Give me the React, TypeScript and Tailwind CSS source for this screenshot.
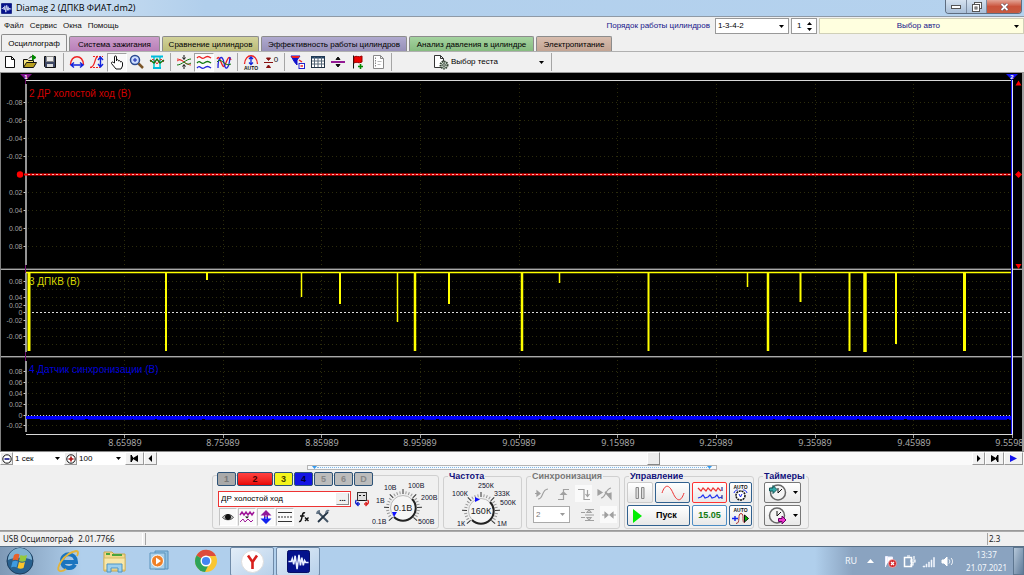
import { FC, ReactNode } from "react";
import clsx from "clsx";

type WithChildren = { children?: ReactNode; className?: string };

const tabs = [
  { name: "Осциллограф", style: "w-[66px] bg-[#f0f0f0]", active: true },
  { name: "Система зажигания", style: "w-[91px] bg-linear-to-b from-[#cc9dcb] to-[#b97fb8]" },
  { name: "Сравнение цилиндров", style: "w-[97px] bg-linear-to-b from-[#d2d29a] to-[#bcbc78]" },
  { name: "Эффективность работы цилиндров", style: "w-[146px] bg-linear-to-b from-[#b0aacf] to-[#9790b8]" },
  { name: "Анализ давления в цилиндре", style: "w-[125px] bg-linear-to-b from-[#a5d3a0] to-[#86bb80]" },
  { name: "Электропитание", style: "w-[76px] bg-linear-to-b from-[#d8bdae] to-[#c3a493]" },
];

/* ---------- small shared parts ---------- */

const Icon: FC<WithChildren & { box?: string }> = ({ children, className = "size-4", box = "0 0 16 16" }) => (
  <svg viewBox={box} className={clsx("block shrink-0", className)} fill="none" stroke="#111" strokeWidth="1" aria-hidden="true">
    {children}
  </svg>
);

const Caret: FC<{ className?: string }> = ({ className = "fill-black" }) => (
  <svg viewBox="0 0 5 3" className={clsx("block h-[3px] w-[5px] shrink-0", className)} aria-hidden="true">
    <path d="M0 0h5L2.5 3z" />
  </svg>
);

type SelectProps = { id: string; label: string; options: string[]; className?: string; disabled?: boolean };

const Select: FC<SelectProps> = ({ id, label, options, className, disabled }) => (
  <div className={clsx("grid items-center bg-white", className)}>
    <select
      id={id}
      aria-label={label}
      disabled={disabled}
      className="col-start-1 row-start-1 w-full appearance-none bg-transparent pl-[2px] text-[8px] leading-[12px] outline-none"
    >
      {options.map((o) => (
        <option key={o}>{o}</option>
      ))}
    </select>
    <span className="pointer-events-none col-start-1 row-start-1 justify-self-end pr-[4px]">
      <Caret className={disabled ? "fill-[#999]" : "fill-black"} />
    </span>
  </div>
);

const ToolButton: FC<WithChildren & { label: string; pressed?: boolean }> = ({ children, label, pressed }) => (
  <button
    type="button"
    aria-label={label}
    className={clsx(
      "flex h-[19px] w-[20px] items-center justify-center border",
      pressed ? "border-[#a0a0a0] border-r-white border-b-white bg-[#fafafa]" : "border-transparent",
    )}
  >
    <Icon>{children}</Icon>
  </button>
);

const Divider = () => <div className="ml-[3px] mr-[3px] h-[18px] w-px bg-[#a5a5a5]" />;

const Logo: FC<{ className?: string }> = ({ className }) => (
  <Icon className={className} box="0 0 24 24">
    <rect x="0.5" y="0.5" width="23" height="23" rx="2" fill="#04128c" stroke="#02085e" />
    <path
      d="M1.500 12h3l1-3 1.500 6 1.500-9 2 14 2-15 1.500 11 1.500-8 1.500 8 1.300-5 1.200 2H22.500"
      stroke="#e8f0ff"
      strokeWidth="1.600"
    />
  </Icon>
);

/* ---------- header ---------- */

const TitleBar = () => (
  <header className="flex h-[17px] items-start justify-between border-b border-[#8f9aa6] bg-linear-to-r from-[#d8e6f3] via-[#b1cfec] via-20% to-[#b5d2ee]">
    <div className="flex h-4 items-center gap-[4px] pl-px">
      <Logo className="size-[11px]" />
      <h1 className="font-['Open_Sans','Noto_Sans',sans-serif] text-[9px] leading-[14px] text-black">
        Diamag 2 (ДПКВ ФИАТ.dm2)
      </h1>
    </div>
    <div className="mr-[2px] flex h-[14px] overflow-hidden rounded-b-[4px] border border-t-0 border-[#5e6d80]">
      <button type="button" aria-label="Свернуть" className="flex w-[21px] items-center justify-center border-r border-[#7d8ca0] bg-linear-to-b from-[#d5e2f0] to-[#a9bfd8]">
        <Icon className="h-[5px] w-[10px]" box="0 0 10 5">
          <rect x="0.5" y="1.500" width="9" height="3" fill="#fff" stroke="#555" />
        </Icon>
      </button>
      <button type="button" aria-label="Восстановить" className="flex w-[20px] items-center justify-center border-r border-[#7d8ca0] bg-linear-to-b from-[#d5e2f0] to-[#a9bfd8]">
        <Icon className="size-[10px]" box="0 0 10 10">
          <rect x="2.500" y="0.5" width="7" height="6" fill="#fff" stroke="#555" />
          <rect x="0.5" y="2.500" width="7" height="7" fill="#fff" stroke="#555" />
          <rect x="3" y="5" width="2" height="2" stroke="#555" />
        </Icon>
      </button>
      <button type="button" aria-label="Закрыть" className="flex w-[34px] items-center justify-center bg-linear-to-b from-[#e2a497] via-[#c9523b] to-[#c75b40]">
        <Icon className="h-[8px] w-[9px]" box="0 0 9 8">
          <path d="M1.500 1l6 6M7.500 1l-6 6" stroke="#545" strokeWidth="3" />
          <path d="M1.500 1l6 6M7.500 1l-6 6" stroke="#fff" strokeWidth="1.800" />
        </Icon>
      </button>
    </div>
  </header>
);

const MenuRow = () => (
  <div className="flex h-[18px] items-center justify-between">
    <nav className="flex gap-[6px] pl-[4px] text-[8px] leading-[12px]">
      {["Файл", "Сервис", "Окна", "Помощь"].map((m) => (
        <a key={m} href="#" className="text-[#111]">
          {m}
        </a>
      ))}
    </nav>
    <div className="flex items-center gap-[2px] text-[8px] leading-[12px]">
      <label htmlFor="order" className="pr-[3px] text-[#15158a]">
        Порядок работы цилиндров
      </label>
      <Select id="order" label="Порядок работы цилиндров" options={["1-3-4-2", "1-2-4-3"]} className="h-4 w-[74px] border border-[#999]" />
      <div className="flex h-4 w-[26px] items-center border border-[#999] bg-white">
        <input aria-label="Цилиндр" defaultValue="1" className="w-[12px] min-w-0 flex-1 pl-[5px] outline-none" />
        <div className="flex flex-col gap-[3px] pr-[4px]">
          <button type="button" aria-label="Больше" className="rotate-180">
            <Caret />
          </button>
          <button type="button" aria-label="Меньше">
            <Caret />
          </button>
        </div>
      </div>
      <button type="button" className="flex h-4 w-[205px] items-center justify-end gap-[74px] border border-[#d0d0b8] bg-[#ffffdf] pr-[4px] text-[#15158a]">
        Выбор авто
        <Caret />
      </button>
    </div>
  </div>
);

const TabRow = () => (
  <div className="flex h-[17px] items-end gap-[2px] border-b border-[#b0b0b0] pl-px" role="tablist">
    {tabs.map((t) => (
      <button
        key={t.name}
        type="button"
        role="tab"
        aria-selected={!!t.active}
        className={clsx(
          "rounded-t-[2px] border border-b-0 border-[#8c8c8c] text-center text-[8px] leading-[13px] whitespace-nowrap text-black",
          t.active ? "h-[17px]" : "h-[15px]",
          t.style,
        )}
      >
        {t.name}
      </button>
    ))}
  </div>
);

const Toolbar = () => (
  <div className="flex h-[21px] items-center border-b border-[#999]">
    <ToolButton label="Новый">
      <path d="M3.500 2.500h6l3 3v8h-9zM9.500 2.500v3h3" fill="#fff" />
    </ToolButton>
    <ToolButton label="Открыть">
      <path d="M1.500 13.500v-8h4l1 1h5v2" fill="#f4e27a" />
      <path d="M1.500 13.500l3-5h10l-3 5z" fill="#b8a020" />
      <path d="M7 4.500c1-2 3-2 4-1.500" />
      <path d="M10.500 1l3.500 2.500-3.500 2.500z" fill="#080" stroke="#080" />
    </ToolButton>
    <ToolButton label="Сохранить">
      <path d="M2.500 2.500h11v11h-10l-1-1z" fill="#3c4664" />
      <rect x="4.500" y="2.500" width="7" height="5" fill="#eee" stroke="#888" />
      <rect x="5" y="10" width="6" height="3" fill="#ddd" stroke="none" />
    </ToolButton>
    <Divider />
    <ToolButton label="Ширина">
      <path d="M1.500 11c0-11 13-11 13 0" stroke="#e22" strokeWidth="1.500" />
      <path d="M2 11h12M5 8.500L2 11l3 2.500M11 8.500L14 11l-3 2.500" stroke="#12d" strokeWidth="1.400" />
    </ToolButton>
    <ToolButton label="Высота">
      <path d="M1 13.500c6 0 4-11 8-11" stroke="#e22" strokeWidth="1.300" />
      <path d="M4 2.500h10M1 13.500h10" stroke="#e22" strokeDasharray="2 1" />
      <path d="M11.500 3v10M9 6l2.500-3L14 6M9 10l2.500 3L14 10" stroke="#12d" strokeWidth="1.400" />
    </ToolButton>
    <ToolButton label="Рука" pressed>
      <path d="M5.500 9V3c0-1.500 2-1.500 2 0v4-1c1-1 2 0 2 1 1-1 2 0 2 1 1-1 2 0 2 1v3l-1.500 3h-5L2.500 9.500c-.5-1.500 1-2 2-1z" fill="#fff" />
    </ToolButton>
    <ToolButton label="Масштаб">
      <circle cx="6" cy="6" r="4.500" fill="#cdf" stroke="#2a4a90" strokeWidth="1.500" />
      <path d="M4 6h4M6 4v4" stroke="#12a" />
      <path d="M9.500 9.500l4.500 4.500" stroke="#7a5528" strokeWidth="2.500" />
    </ToolButton>
    <ToolButton label="Курсоры">
      <path d="M5 2v12M11 2v12" stroke="#0cc" strokeWidth="1.500" />
      <path d="M2 2.500h12M4 14h8" stroke="#0bd" strokeWidth="2" />
      <path d="M1 8l3-3 4 5 4-5 3 3" stroke="#d33" />
      <path d="M1 6l4 3 3-4 3 4 4-3" stroke="#171" strokeWidth="1.300" />
    </ToolButton>
    <Divider />
    <ToolButton label="Центр">
      <path d="M1 5c5 0 9 6 14 6M1 7c3-2 5-1 7 1" stroke="#e33" />
      <path d="M1 11c5 0 9-6 14-6M15 9c-3 2-5 1-7-1" stroke="#171" />
      <path d="M8 1v4M6.500 3.500L8 5.500l1.500-2M8 15v-4M6.500 12.500L8 10.500l1.500 2" />
    </ToolButton>
    <ToolButton label="Раздельно" pressed>
      <path d="M1 4c3-4 4 2 7 0s4-2 7 0" stroke="#e22" strokeWidth="1.300" />
      <path d="M1 9c3-4 4 2 7 0s4-2 7 0" stroke="#171" strokeWidth="1.300" />
      <path d="M1 14c3-4 4 2 7 0s4-2 7 0" stroke="#22d" strokeWidth="1.300" />
    </ToolButton>
    <ToolButton label="Наложение">
      <path d="M1 5c3-7 5 13 8 6s4-10 6-5" stroke="#e22" strokeWidth="1.300" />
      <path d="M2 14c0-13 5-13 6-5s5 7 6-6" stroke="#22d" strokeWidth="1.300" />
      <path d="M1 8c4-6 8 6 14 2" stroke="#171" />
    </ToolButton>
    <Divider />
    <ToolButton label="Автомасштаб">
      <path d="M1.500 10C2-1 14-1 14.500 10" stroke="#e22" strokeWidth="1.300" />
      <path d="M8 3v7M6 5l2-2 2 2M6 8.500l2 2 2-2" stroke="#12d" strokeWidth="1.300" />
      <text x="8" y="15.500" textAnchor="middle" stroke="none" fill="#111" className="text-[5px] font-bold">AUTO</text>
    </ToolButton>
    <ToolButton label="Обнулить">
      <path d="M1 8.500h9M3.500 4h4L5.500 6.500z" fill="#811" stroke="#811" />
      <path d="M3.500 13.500h4L5.500 11z" fill="#811" stroke="#811" />
      <text x="13" y="8" textAnchor="middle" stroke="none" fill="#111" className="text-[8px]">0</text>
    </ToolButton>
    <Divider />
    <ToolButton label="Фильтр">
      <path d="M1 2h9L7 6v5L4.500 8z" fill="#11c" stroke="#11c" />
      <path d="M1 2h9L8.500 4h-6z" fill="#e22" stroke="none" />
      <rect x="9" y="9.500" width="5.500" height="5" fill="#fff" stroke="#22c" />
      <path d="M9 6l3 2M10.500 12h2.500" stroke="#e22" strokeWidth="1.500" />
    </ToolButton>
    <ToolButton label="Таблица">
      <rect x="1.500" y="2.500" width="13" height="11" fill="#fff" stroke="#234" />
      <path d="M1.500 3.500h13" stroke="#246" strokeWidth="2" />
      <path d="M4.500 3v10M8 3v10M11.500 3v10M2 7h12M2 10h12" stroke="#567" />
    </ToolButton>
    <ToolButton label="Разделить">
      <path d="M1 8h14" stroke="#808" strokeWidth="1.800" />
      <path d="M8 3l2 2.500H6zM8 13l2-2.500H6z" fill="#111" />
    </ToolButton>
    <ToolButton label="Метка">
      <path d="M3.500 1.500v13" />
      <path d="M4 3c3-2 4 1 8-1v6c-4 2-5-1-8 1z" fill="#e00" stroke="#900" />
      <path d="M10.500 10v5M8 12.500h5" stroke="#080" strokeWidth="1.600" />
    </ToolButton>
    <ToolButton label="Отчёт">
      <path d="M3.500 1.500h7l3 3v10h-10zM10.500 1.500v3h3" fill="#fff" stroke="#888" />
      <path d="M5.500 3.500v10" stroke="#888" strokeDasharray="1.500 1" />
      <path d="M7.500 7.500h4M7.500 10.500h3" stroke="#bbb" />
    </ToolButton>
    <Divider />
    <button type="button" className="flex h-[19px] w-[156px] items-center gap-[2px] pr-[7px] pl-[38px] text-[8px] leading-[12px]">
      <Icon>
        <path d="M1.500 1.500h6l3 3v9h-9zM7.500 1.500v3h3" fill="#fff" stroke="#333" />
        <circle cx="11" cy="11" r="3.500" fill="#cdd8cd" stroke="#354535" strokeWidth="2" strokeDasharray="1.500 0.800" />
        <circle cx="11" cy="11" r="1.300" fill="#fff" stroke="#354535" />
      </Icon>
      <span className="flex-1 text-left">Выбор теста</span>
      <Caret />
    </button>
    <div className="h-[18px] w-px bg-[#a5a5a5]" />
  </div>
);

/* ---------- oscilloscope screen ---------- */

const timeMarks = ["8.65989", "8.75989", "8.85989", "8.95989", "9.05989", "9.15989", "9.25989", "9.35989", "9.45989", "9.55989"];

const scales: { y: number; label?: string }[] = [
  { y: 102, label: "-0.08" },
  { y: 120, label: "-0.06" },
  { y: 138, label: "-0.04" },
  { y: 156, label: "-0.02" },
  { y: 192, label: "0.02" },
  { y: 210, label: "0.04" },
  { y: 228, label: "0.06" },
  { y: 246, label: "0.08" },
  { y: 281, label: "0.08" },
  { y: 289 },
  { y: 297, label: "0.04" },
  { y: 305, label: "0.02" },
  { y: 312, label: "0" },
  { y: 320, label: "-0.02" },
  { y: 328 },
  { y: 336, label: "-0.06" },
  { y: 344 },
  { y: 371, label: "0.08" },
  { y: 382, label: "0.06" },
  { y: 393, label: "0.04" },
  { y: 404, label: "0.02" },
  { y: 415, label: "0" },
  { y: 425, label: "-0.02" },
];

// [x, bottom, width] of every pulse of the crankshaft sensor
const pulses = [
  [29, 351, 3], [166, 351, 2], [207, 280, 2], [301.5, 297, 1.5], [340, 304, 2], [397.5, 322, 1.5],
  [415, 351, 2.5], [449, 304, 2], [522, 351, 2.5], [559.5, 283, 1.5], [648.5, 351, 2], [747.5, 287, 1.5],
  [768, 351, 2.5], [800.5, 302, 2], [849.5, 351, 2], [865, 352, 3.5], [896, 344, 2], [964.5, 351, 3],
];

const Screen = () => (
  <svg viewBox="0 73 1024 378" className="block h-auto w-full bg-black" role="img" aria-label="Осциллограммы">
    <rect x="0" y="73" width="1" height="378" fill="#808080" />
    <g stroke="#2c2c0c" strokeDasharray="1 3">
      {timeMarks.slice(0, 9).map((t, i) => (
        <path key={t} d={`M${Math.round(124 + i * 98.65) + 0.5} 84V434`} />
      ))}
      {scales.map((s) => (
        <path key={s.y} d={`M28 ${s.y + 0.5}H1011`} />
      ))}
    </g>
    <path d="M26 80.500H1013" stroke="#d8d8d8" />
    <path d="M1 268.500H1022M1 357.500H1022" stroke="#444" />
    <path d="M1 269.500H1022M1 356.500H1022" stroke="#a8a8a8" />
    <path d="M26 434.500H1013" stroke="#d8d8d8" />
    <path d="M26 84V265M26 273V352M26 361V432" stroke="#959595" strokeWidth="2" />
    <path d="M25.500 80V84M25.500 265V273M25.500 352V361" stroke="#70106e" />
    <g className="text-[7px]" fill="#a4a4a4" textAnchor="end">
      {scales.map((s) => (
        <g key={s.y}>
          <path d={`M23.500 ${s.y + 0.5}h2`} stroke="#ccc" />
          {s.label && <text x="22.500" y={s.y + 3}>{s.label}</text>}
        </g>
      ))}
    </g>
    <g className="font-['Noto_Sans',sans-serif] text-[9px]" fill="#a8a8a8" textAnchor="middle">
      {timeMarks.map((t, i) => (
        <g key={t}>
          <path d={`M${Math.round(124 + i * 98.65) + 0.5} 435v3`} stroke="#999" />
          <text x={Math.round(124.500 + i * 98.65)} y="446">{t}</text>
        </g>
      ))}
    </g>

    <path d="M24 174.500H1011" stroke="#f00" strokeWidth="2" />
    <path d="M28 174.500H1011" stroke="#ffb0b0" strokeDasharray="2 2" />
    <circle cx="20" cy="174.500" r="3.200" fill="#f00" />

    <path d="M26 272.500H1011" stroke="#ff0" strokeWidth="1.500" />
    <path d="M28 312.500H1011" stroke="#ddd" strokeDasharray="2 2" />
    {pulses.map(([x, bottom, width]) => (
      <path key={x} d={`M${x} 272V${bottom}`} stroke="#ff0" strokeWidth={width} />
    ))}

    <rect x="26" y="416" width="986" height="3" fill="#00f" />
    <path d="M28 415.500H1011" stroke="#ccd" strokeDasharray="1 2" />
    <path d="M40 419.500H1011" stroke="#00c" strokeDasharray="31 2 12 3 44 1 22 2" />

    <g className="text-[10px]">
      <text x="29" y="97" fill="#d00000">2 ДР холостой ход (В)</text>
      <text x="29" y="285" fill="#d8d800">3 ДПКВ (В)</text>
      <text x="29" y="373" fill="#0000d8">4 Датчик синхронизации (В)</text>
    </g>

    <path d="M1011.500 78V434" stroke="#11e" />
    <path d="M1012.500 80V434" stroke="#e0e0ff" />
    <path d="M20 74H32L26 80z" fill="#80108a" />
    <path d="M1006 74H1018L1012 80z" fill="#11e" />
    <g className="text-[6px] font-bold" fill="#fff" textAnchor="middle">
      <text x="26" y="79">1</text>
      <text x="1012" y="79">2</text>
    </g>
    <path d="M1018.500 80.500l3 5h-6zM1018.500 269l3-5h-6zM1018.500 171l3.500 3.500-3.500 3.500-3.500-3.500z" fill="#f00" />
    <rect x="1022" y="73" width="2" height="378" fill="#a0a0a0" />
  </svg>
);

const RoundSign: FC<{ label: string; d: string; color: string }> = ({ label, d, color }) => (
  <button type="button" aria-label={label} className="flex h-[13px] w-[13px] items-center justify-center border border-[#999] border-t-white border-l-white bg-[#ececec]">
    <Icon className="size-[10px]" box="0 0 10 10">
      <circle cx="5" cy="5" r="4.200" fill="#fff" />
      <path d={d} stroke={color} strokeWidth="1.600" />
    </Icon>
  </button>
);

const NavButton: FC<{ label: string; d: string; wide?: boolean; blue?: boolean }> = ({ label, d, wide, blue }) => (
  <button
    type="button"
    aria-label={label}
    className={clsx(
      "flex h-[13px] items-center justify-center border border-[#999] border-t-white border-l-white bg-[#f2f2f2]",
      wide ? "w-[19px]" : "w-[13px]",
    )}
  >
    <svg viewBox="0 0 9 7" className={clsx("block h-[7px] w-[9px]", blue ? "fill-[#11e]" : "fill-black")} aria-hidden="true">
      <path d={d} />
    </svg>
  </button>
);

const ScrollRow = () => (
  <div className="flex h-[14px] items-center border-t border-[#888] bg-[#fafafa] pr-px">
    <RoundSign label="Уменьшить" d="M2.500 5h5" color="#118" />
    <Select id="sweep" label="Развёртка" options={["1 сек", "2 сек"]} className="w-[51px]" />
    <RoundSign label="Увеличить" d="M2.500 5h5M5 2.500v5" color="#a11" />
    <Select id="zoom" label="Масштаб, %" options={["100", "200"]} className="w-[48px]" />
    <NavButton label="В начало" wide d="M0.500 0H2v7H0.500zM8 0v7L3 4v1.500H2v-4h1V3z" />
    <NavButton label="Назад" d="M6 0v7L2.500 3.500z" />
    <input
      type="range"
      aria-label="Прокрутка"
      min={0}
      max={1000}
      defaultValue={611}
      className="h-[13px] min-w-0 flex-1 appearance-none bg-transparent [&::-webkit-slider-thumb]:h-[13px] [&::-webkit-slider-thumb]:w-[13px] [&::-webkit-slider-thumb]:appearance-none [&::-webkit-slider-thumb]:border [&::-webkit-slider-thumb]:border-[#888] [&::-webkit-slider-thumb]:border-t-white [&::-webkit-slider-thumb]:border-l-white [&::-webkit-slider-thumb]:bg-[#ececec]"
    />
    <NavButton label="Вперёд" d="M3 0v7l3.500-3.500z" />
    <NavButton label="В конец" wide d="M1 0v7l5-3v1.500h1v-4H6V3zM7 0h1.500v7H7z" />
    <NavButton label="Воспроизвести" wide blue d="M1 0v7l7-3.500z" />
  </div>
);

/* ---------- control panel ---------- */

const Group: FC<WithChildren & { title: string; disabled?: boolean }> = ({ title, disabled, children, className }) => (
  <fieldset disabled={disabled} className={clsx("h-[58px] rounded-[3px] border border-[#d0d0d0]", className)}>
    <legend className={clsx("ml-[4px] px-px text-[9px] leading-[10px] font-bold", disabled ? "text-[#777]" : "text-[#10107c]")}>
      {title}
    </legend>
    {children}
  </fieldset>
);

const channels = [
  { name: "1", style: "w-[19px] bg-[#a9a9a9] text-[#777]" },
  { name: "2", style: "w-[36px] bg-linear-to-b from-[#ff4040] to-[#e80000] text-[#400]" },
  { name: "3", style: "w-[19px] bg-[#f4f41c] text-[#440]" },
  { name: "4", style: "w-[19px] bg-[#1414e4] text-[#003]" },
  { name: "5", style: "w-[19px] bg-[#bcbcbc] text-[#888]" },
  { name: "6", style: "w-[19px] bg-[#bcbcbc] text-[#888]" },
  { name: "D", style: "w-[19px] bg-[#bcbcbc] text-[#888]" },
];

type DialMark = { x: number; y: number; label: string };

const Dial: FC<{ box: string; className: string; value: string; cx: number; cy: number; marks: DialMark[]; pointer: string }> = ({
  box,
  className,
  value,
  cx,
  cy,
  marks,
  pointer,
}) => (
  <svg viewBox={box} className={clsx("block shrink-0", className)} role="img" aria-label={value}>
    {Array.from({ length: 25 }, (_, i) => (
      <path
        key={i}
        d={`M${cx} ${cy - 14}v${i % 4 === 0 ? -5 : -3}`}
        stroke={i % 4 === 0 ? "#333" : "#999"}
        transform={`rotate(${-132 + i * 11} ${cx} ${cy})`}
      />
    ))}
    <circle cx={cx} cy={cy} r="12.500" fill="#f6f6f6" stroke="#bbb" />
    <path d={`M${cx + 9} ${cy - 9}A12.700 12.700 0 0 1 ${cx - 9} ${cy + 9}`} fill="none" stroke="#222" strokeWidth="2" />
    <path d={pointer} fill="#11f" />
    <text x={cx} y={cy + 3} textAnchor="middle" fill="#222" className="text-[9px]">
      {value}
    </text>
    <g className="text-[7px]" fill="#10102c">
      {marks.map((m) => (
        <text key={m.label} x={m.x} y={m.y}>
          {m.label}
        </text>
      ))}
    </g>
  </svg>
);

const MiniButton: FC<WithChildren & { label: string; pressed?: boolean }> = ({ children, label, pressed }) => (
  <button
    type="button"
    aria-label={label}
    className={clsx(
      "flex size-[18px] items-center justify-center border",
      pressed ? "border-[#c4c4c4] border-r-white border-b-white bg-[#fafafa]" : "border-transparent",
    )}
  >
    <Icon>{children}</Icon>
  </button>
);

const ChannelGroup = () => (
  <div className="mt-[4px] flex h-[54px] w-[227px] rounded-[3px] border border-[#d0d0d0]">
    <div className="ml-[4px] flex w-[158px] flex-col">
      <div className="-mt-[4px] flex gap-px">
        {channels.map((c) => (
          <button
            key={c.name}
            type="button"
            className={clsx("h-[14px] rounded-[2px] border border-[#2d5378] text-center text-[9px] leading-[12px] font-bold", c.style)}
          >
            {c.name}
          </button>
        ))}
      </div>
      <div className="mt-[5px] flex items-center gap-[3px] pl-px">
        <div className="flex h-[16px] w-[133px] items-center border border-[#e33] bg-white pr-px">
          <input aria-label="Название канала" defaultValue="ДР холостой ход" className="min-w-0 flex-1 pl-[2px] text-[8px] leading-[12px] outline-none" />
          <button type="button" aria-label="Выбрать" className="h-[12px] w-[13px] border border-[#888] border-t-[#eee] border-l-[#eee] bg-[#f0f0f0] text-[8px] leading-[6px] font-bold">
            ...
          </button>
        </div>
        <button type="button" aria-label="Инверсия">
          <Icon>
            <rect x="3.500" y="1.500" width="9" height="8" fill="#dedede" stroke="#333" />
            <path d="M5 4.500h2M9 4.500h2M5 9.500h6" />
            <path d="M6 13H2.500c-1.500-1-1-3 0-4M4.500 11l-2 2 2 2" stroke="#12c" strokeWidth="1.300" />
            <path d="M10 13h3.500c1.500-1 1-3 0-4M11.500 11l2 2-2 2" stroke="#d22" strokeWidth="1.300" />
          </Icon>
        </button>
      </div>
      <div className="mt-px flex gap-px pl-[2px]">
        <MiniButton label="Показать" pressed>
          <path d="M2.500 8.500c2.500-4 8.500-4 11 0-2.500 3-8.500 3-11 0z" fill="#bbb" stroke="#555" />
          <circle cx="8" cy="8" r="2.500" fill="#111" />
        </MiniButton>
        <MiniButton label="Сглаживание" pressed>
          <path d="M1 6l2-3 2 3 2-3 2 3 2-3 2 3 2-3" stroke="#a0179a" strokeWidth="1.500" />
          <path d="M1 13l3-3 2 3 3-3 3 3 2-2" stroke="#a0179a" />
          <path d="M6 7.500h4L8 9.500z" fill="#111" stroke="none" />
        </MiniButton>
        <MiniButton label="Сдвиг" pressed>
          <path d="M8 1l5.500 5.500H10V8H6V6.500H2.500z" fill="#90189a" stroke="none" />
          <path d="M8 15l5.500-5.500H10V8H6v1.500H2.500z" fill="#12e" stroke="none" />
          <path d="M8 6v4" stroke="#dde" />
        </MiniButton>
        <MiniButton label="Уровни" pressed>
          <path d="M1 3.500h14M1 12.500h14" stroke="#333" />
          <path d="M1 8h14" stroke="#333" strokeDasharray="2 1" />
        </MiniButton>
        <MiniButton label="Функция">
          <path d="M9 4c-2-1-2.500 1-3 4S4.500 13 3 12.500M4 7h4.500" strokeWidth="1.500" />
          <path d="M9 8.500l3.500 3.500M12.500 8.500L9 12" strokeWidth="1.400" />
        </MiniButton>
        <MiniButton label="Настройка">
          <path d="M3 3l10 10" stroke="#456" strokeWidth="2" />
          <path d="M13 3L3 13" stroke="#234" strokeWidth="1.800" />
          <path d="M2 5c0-2 1-3 3-3M11 4c0-2 2-3 3-2" stroke="#678" strokeWidth="1.800" />
        </MiniButton>
      </div>
    </div>
    <Dial
      box="372 478 66 50"
      className="-ml-[2px] h-[50px] w-[66px]"
      value="0.1В"
      cx={403}
      cy={510}
      pointer="M392 514l5 0-3 5z"
      marks={[
        { x: 384, y: 492, label: "10В" },
        { x: 408, y: 490, label: "100В" },
        { x: 376, y: 505, label: "1В" },
        { x: 421, y: 502, label: "200В" },
        { x: 372, y: 526, label: "0.1В" },
        { x: 418, y: 526, label: "500В" },
      ]}
    />
  </div>
);

const RunButton: FC<WithChildren & { label?: string }> = ({ children, label, className }) => (
  <button
    type="button"
    aria-label={label}
    className={clsx("flex h-[21px] items-center justify-center rounded-[2px] border bg-linear-to-b from-white to-[#e8e8e8]", className)}
  >
    {children}
  </button>
);

const SyncIcon: FC<WithChildren & { label: string; pressed?: boolean }> = ({ children, label, pressed }) => (
  <button type="button" aria-label={label} className={clsx("flex size-[17px] items-center justify-center", pressed && "bg-[#fafafa]")}>
    <svg viewBox="0 0 16 16" className="block size-[16px]" fill="none" stroke="#a0a0a0" strokeWidth="1.200" aria-hidden="true">
      {children}
    </svg>
  </button>
);

const ControlPanel = () => (
  <section className="border-b border-[#999] bg-[#f0f0f0]">
    <div className="flex h-[5px] justify-center">
      <div className="flex w-[410px] items-center justify-between border border-[#b4b4b4] bg-[#f6f9fc] px-[4px]">
        <Caret className="fill-[#39e]" />
        <span className="h-0 flex-1 border-t border-dotted border-[#7db8e8]" />
        <Caret className="fill-[#39e]" />
      </div>
    </div>
    <div className="flex h-[60px] items-start justify-center gap-[4px] pt-px pr-[3px]">
      <ChannelGroup />
      <Group title="Частота" className="w-[79px]">
        <Dial
          box="444 480 77 47"
          className="h-[47px] w-[77px]"
          value="160К"
          cx={481}
          cy={510}
          pointer="M475 496l5 2.500-5 2.500z"
          marks={[
            { x: 478, y: 487, label: "250К" },
            { x: 452, y: 495, label: "100К" },
            { x: 494, y: 495, label: "333К" },
            { x: 500, y: 504, label: "500К" },
            { x: 457, y: 525, label: "1К" },
            { x: 497, y: 525, label: "1М" },
          ]}
        />
      </Group>
      <Group title="Синхронизация" disabled className="w-[94px]">
        <div className="flex flex-col gap-[4px] pt-[4px] pl-[6px]">
          <div className="flex gap-[4px]">
            <SyncIcon label="По уровню">
              <path d="M3 5l3 2.500L3 10z" fill="#a0a0a0" />
              <path d="M4 13c6 0 3-9.500 10-10M1 7.500h3" />
            </SyncIcon>
            <SyncIcon label="По фронту">
              <path d="M3 13.500h5.500V3.500H14M8.500 6L6 8.500h5z" fill="none" />
            </SyncIcon>
            <SyncIcon label="По спаду" pressed>
              <path d="M2 3.500h6v10h6M11.500 4v6M9.500 8l2 2.500 2-2.500" />
            </SyncIcon>
            <SyncIcon label="Вручную">
              <path d="M1 4l4 2.500L1 9z" fill="#a0a0a0" />
              <path d="M4 12C9 12 8 3 14 2" />
              <path d="M8 6l6 7V7l-3 1z" fill="#a0a0a0" />
            </SyncIcon>
          </div>
          <div className="flex items-center gap-[4px]">
            <Select id="sync" label="Канал синхронизации" disabled options={["2", "3"]} className="h-[17px] w-[37px] border border-[#aaa] bg-[#f0f0f0] text-[#777]" />
            <span className="w-px" />
            <SyncIcon label="Окно">
              <path d="M1 5.500h4M1 10.500h4M5 8h9M5 2.500h9M5 13.500h9M9 3l-2 2.500h4zM9 13l-2-2.500h4z" />
            </SyncIcon>
            <SyncIcon label="Сжать" pressed>
              <path d="M1 8h3M4 5.500L7 8l-3 2.500zM15 8h-3M12 5.500L9 8l3 2.500z" fill="#a0a0a0" />
            </SyncIcon>
          </div>
        </div>
      </Group>
      <Group title="Управление" className="w-[130px]">
        <div className="flex flex-col gap-[2px] pt-px pl-[2px]">
          <div className="flex gap-[2px]">
            <RunButton label="Пауза" className="w-[26px] border-[#ccc]">
              <Icon className="h-[14px] w-[12px]" box="0 0 12 14">
                <path d="M2 1.500h2.500v11H2zM7.500 1.500H10v11H7.500z" fill="#ddd" stroke="#888" />
              </Icon>
            </RunButton>
            <RunButton label="Синус" className="w-[35px] border-[#31618f]">
              <Icon className="h-[16px] w-[24px]" box="0 0 24 16">
                <path d="M1 8C4-1 8-1 12 8s8 9 11 0" stroke="#e33" />
              </Icon>
            </RunButton>
            <RunButton label="Каналы" className="w-[35px] border-[#f33]">
              <Icon className="h-[16px] w-[26px]" box="0 0 26 16">
                <path d="M1 3l3 3 2-3 3 3 2-3 3 3 2-3 3 3 2-3 3 3" stroke="#e33" strokeWidth="1.200" />
                <path d="M1 13l3-1 2-2 2 3 3-1 2-2 2 3 3-1 2-2 2 3 3-1" stroke="#23e" strokeWidth="1.200" />
                <path d="M25 2v4M25 10v4" stroke="#118" />
              </Icon>
            </RunButton>
            <RunButton label="Автовольты" className="w-[23px] border-[#31618f]">
              <Icon className="size-[19px]" box="0 0 19 19">
                <text x="9.500" y="6" textAnchor="middle" stroke="none" fill="#111" className="text-[5px] font-bold">AUTO</text>
                <circle cx="9.500" cy="12.500" r="4.500" fill="#fff" strokeWidth="1.500" strokeDasharray="2 0.700" />
                <path d="M3 10c1-3 3-3 4-3M16 10c-1-3-3-3-4-3M8 11l1.500 3L11 11" stroke="#12e" />
              </Icon>
            </RunButton>
          </div>
          <div className="flex gap-[2px]">
            <RunButton className="w-[63px] gap-[14px] border-[#31618f] pr-[7px] text-[9px] font-bold">
              <svg viewBox="0 0 9 14" className="h-[14px] w-[9px] fill-[#0e0]" aria-hidden="true">
                <path d="M0 0l9 7-9 7z" />
              </svg>
              Пуск
            </RunButton>
            <RunButton className="w-[35px] border-[#4c8cc4] text-[9px] font-bold text-[#117a11]">15.05</RunButton>
            <RunButton label="Автосинхронизация" className="w-[23px] border-[#31618f]">
              <Icon className="size-[19px]" box="0 0 19 19">
                <text x="9.500" y="6" textAnchor="middle" stroke="none" fill="#111" className="text-[5px] font-bold">AUTO</text>
                <path d="M1 12.500h6M4 10v5" stroke="#12e" strokeWidth="1.400" />
                <path d="M5 17.500c5 0 1-10 5-10s0 10 4 9" stroke="#a33" />
                <path d="M13.500 9l4 3.500-4 3.500z" fill="#0b0" />
              </Icon>
            </RunButton>
          </div>
        </div>
      </Group>
      <Group title="Таймеры" className="w-[51px]">
        <div className="flex flex-col gap-[2px] pt-px pl-[5px]">
          <RunButton label="Таймер старта" className="w-[37px] gap-[6px] border-[#777]">
            <Icon className="size-[19px]" box="0 0 19 19">
              <circle cx="10" cy="9.500" r="7.500" fill="#f4f4f4" stroke="#666" strokeWidth="1.500" />
              <path d="M10 10V5M10 10l4-4" />
              <path d="M1.500 5H5V2.500L9 6.500l-4 4V8H1.500z" fill="#3aa" stroke="#155" />
            </Icon>
            <Caret />
          </RunButton>
          <RunButton label="Таймер остановки" className="w-[37px] gap-[6px] border-[#777]">
            <Icon className="size-[19px]" box="0 0 19 19">
              <circle cx="9" cy="9.500" r="7.500" fill="#f4f4f4" stroke="#666" strokeWidth="1.500" />
              <path d="M9 10V5M9 10l4-4" />
              <path d="M10.500 12.500H14V10l4 4-4 4v-2.500h-3.500z" fill="#e3c" stroke="#606" />
            </Icon>
            <Caret />
          </RunButton>
        </div>
      </Group>
    </div>
  </section>
);

const StatusBar = () => (
  <footer className="flex h-[15px] gap-[2px] border-t border-[#aaa] bg-[#f0f0f0] py-px pr-[2px] font-['Noto_Sans',sans-serif] text-[8px] leading-[12px] text-[#222]">
    <div className="flex w-[143px] gap-[5px] border-r border-[#fff] pl-[3px]">
      <span>USB Осциллограф</span>
      <span>2.01.7766</span>
    </div>
    <div className="flex-1 border-l border-[#a5a5a5]" />
    <div className="w-[35px] border-l border-[#a5a5a5] pl-px">2.3</div>
  </footer>
);

/* ---------- desktop task bar ---------- */

const TaskButton: FC<WithChildren & { label: string; open?: boolean }> = ({ label, open, children }) => (
  <button
    type="button"
    aria-label={label}
    className={clsx(
      "mx-px flex h-[29px] w-[44px] items-center justify-center rounded-[2px] border",
      open ? "border-[#6f8aa8] bg-linear-to-br from-[#e2edf8] to-[#b8d1ea]" : "border-transparent",
    )}
  >
    {children}
  </button>
);

const TaskBar = () => (
  <div className="flex h-[29px] items-center justify-between border-t border-[#5a7086] bg-linear-to-r from-[#7e99b6] via-[#b0cfec] via-8% to-[#b0cfec]">
    <div className="flex items-center">
      <button type="button" aria-label="Пуск" className="flex w-[45px] pl-[6px]">
        <Icon className="size-[28px]" box="0 0 28 28">
          <circle cx="14" cy="14" r="13" fill="#28618f" stroke="#1c3d5e" />
          <path d="M2 13a12 12 0 0 1 24 0c-6-3-18-3-24 0z" fill="#7fb2d2" stroke="none" />
          <path d="M8 8c2-1.500 4-1.500 5.500-.5L12 13.500c-1.500-1-3.500-1-5.500 0z" fill="#e8622a" stroke="none" />
          <path d="M14.500 8c2 1 4 1 6.500 0l-1.500 6c-2 1-4.500 1-6.500 0z" fill="#95c93d" stroke="none" />
          <path d="M6.500 14.500c2-1 4-1 5.500 0L10.500 20.500c-1.500-1-3.500-1-5.500 0z" fill="#3f9be0" stroke="none" />
          <path d="M13 15c2 1 4 1 6 0l-1.500 6c-2 1-4 1-6 0z" fill="#fbc62b" stroke="none" />
        </Icon>
      </button>
      <TaskButton label="Internet Explorer">
        <Icon className="size-[24px]" box="0 0 24 24">
          <path d="M19 15.500c-3 5.500-13 4.500-13-3.500 0-9 14-9 14 1H8" stroke="#1b74bf" strokeWidth="4" />
          <path d="M4 22C-2 21 8 4 20 2c3 0 2 3 1 5M4 22c2 .5 4-.5 6-2" stroke="#e3b43c" strokeWidth="1.800" />
        </Icon>
      </TaskButton>
      <TaskButton label="Проводник">
        <Icon className="size-[25px]" box="0 0 25 25">
          <path d="M2 3h8l2 2h11v17H2z" fill="#f1d98b" stroke="#c9a74c" />
          <path d="M4 5h4M10 6h10" stroke="#4aa53c" strokeWidth="2" />
          <path d="M2 9h21v12H2z" fill="#f8e7a9" stroke="#d7bb66" />
          <path d="M5 23v-8h15v8h-4v-4H9v4z" fill="#9cd0ee" stroke="#4d94c4" />
        </Icon>
      </TaskButton>
      <TaskButton label="Проигрыватель">
        <Icon className="size-[24px]" box="0 0 24 24">
          <path d="M7 2h13v18H7z" fill="#8dbfe0" stroke="#5b93bd" />
          <path d="M2 4h15v16H2z" fill="#a9d0ea" stroke="#5b93bd" />
          <circle cx="9.500" cy="12" r="6" fill="#f08026" stroke="#fff" />
          <path d="M8 8.500l5 3.500-5 3.500z" fill="#fff" stroke="none" />
        </Icon>
      </TaskButton>
      <TaskButton label="Chrome">
        <Icon className="size-[24px]" box="0 0 24 24">
          <circle cx="12" cy="12" r="11" fill="#f9c632" stroke="none" />
          <path d="M12 12L2.500 6.500A11 11 0 0 1 22 7H12z" fill="#de4b3c" stroke="none" />
          <path d="M12 12L2.500 6.500A11 11 0 0 0 11 23l4-8z" fill="#2ea35a" stroke="none" />
          <circle cx="12" cy="12" r="4.800" fill="#4285f4" stroke="#fff" strokeWidth="1.400" />
        </Icon>
      </TaskButton>
      <TaskButton label="Яндекс Браузер" open>
        <Icon className="size-[23px]" box="0 0 23 23">
          <circle cx="11.500" cy="11.500" r="11" fill="#fff" stroke="#ddd" />
          <path d="M7 5.500l4.500 6.500L16 5.500M11.500 11.500V19" stroke="#d8201c" strokeWidth="2.600" />
        </Icon>
      </TaskButton>
      <TaskButton label="Diamag 2" open>
        <Logo className="size-[23px]" />
      </TaskButton>
    </div>
    <div className="flex h-full items-center gap-[6px] bg-linear-to-r from-[#b0cfec] via-[#8aa3c0] via-18% to-[#8aa3c0] pl-[30px] font-['Noto_Sans',sans-serif] text-[#f4f8fc]">
      <span className="pr-[4px] text-[9px] leading-[12px]">RU</span>
      <svg viewBox="0 0 7 4" className="mr-[4px] h-[4px] w-[7px] fill-white" aria-hidden="true">
        <path d="M3.500 0L7 4H0z" />
      </svg>
      <Icon className="size-[13px]" box="0 0 13 13">
        <path d="M1.500 12V1.500h2V8M3.500 2h5v5h-5" fill="#fff" stroke="#eef" />
        <circle cx="8.500" cy="8.500" r="4" fill="#d2282c" stroke="#fcc" strokeWidth="0.600" />
        <path d="M7 7l3 3M10 7l-3 3" stroke="#fff" strokeWidth="1.200" />
      </Icon>
      <Icon className="size-[13px]" box="0 0 13 13">
        <rect x="1.500" y="2.500" width="7" height="9" stroke="#fff" strokeWidth="1.500" />
        <path d="M4 1h3M11 1v3M8 5h4v2H8zM10 7v3H7" stroke="#fff" strokeWidth="1.200" />
      </Icon>
      <Icon className="size-[13px]" box="0 0 13 13">
        <path d="M1 11h2v1H1zM4 9h1v3H4zM6.500 7h1v5h-1zM9 5h1v7H9zM11.500 2.500h1V12h-1z" fill="#fff" stroke="#e6eef8" strokeWidth="0.600" />
      </Icon>
      <Icon className="size-[13px]" box="0 0 13 13">
        <path d="M1 5h2l3-3v9L3 8H1z" fill="#fff" stroke="#fff" />
        <path d="M8 4.500c1 1 1 3 0 4M10 3c2 2 2 5 0 7" stroke="#fff" />
      </Icon>
      <div className="ml-[6px] text-center text-[8px] leading-[13px]">
        <div>13:37</div>
        <div>21.07.2021</div>
      </div>
      <button type="button" aria-label="Показать рабочий стол" className="h-full w-[11px] border border-[#5d7690] bg-linear-to-br from-[#b6c8da] to-[#5f7b99]" />
    </div>
  </div>
);

export default function App() {
  return (
    <div className="flex min-h-screen flex-col bg-[#f0f0f0] font-['Liberation_Sans',Arial,sans-serif] text-black">
      <TitleBar />
      <MenuRow />
      <TabRow />
      <Toolbar />
      <Screen />
      <ScrollRow />
      <ControlPanel />
      <StatusBar />
      <TaskBar />
    </div>
  );
}
